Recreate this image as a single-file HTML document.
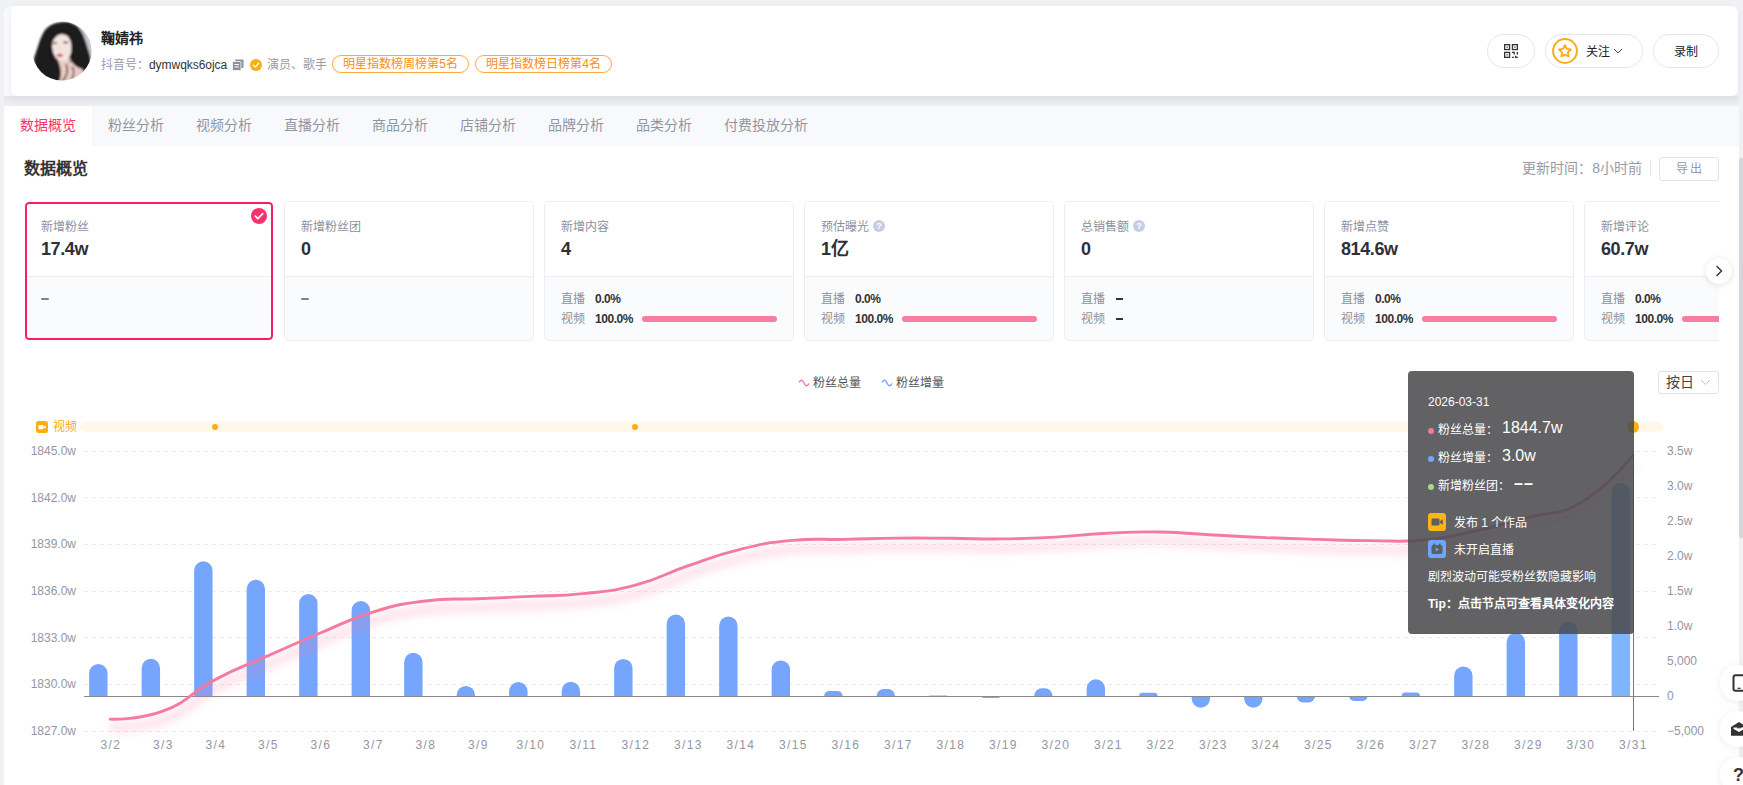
<!DOCTYPE html>
<html lang="zh-CN"><head><meta charset="utf-8"><title>数据概览</title>
<style>
*{box-sizing:border-box;margin:0;padding:0}
html,body{width:1743px;height:785px;overflow:hidden}
body{background:#f0f1f5;font-family:"Liberation Sans",sans-serif;font-size:12px;color:#333;position:relative}
.abs{position:absolute}
#lband{left:4px;top:6px;width:20px;height:90px;background:#f9fafc;border-radius:8px 0 0 0}
#gap{left:4px;top:96px;width:1735px;height:10px;background:linear-gradient(#e6e8ec,#edeff2)}
#hdr{left:11px;top:6px;width:1727px;height:90px;background:#fff;border-radius:6px;box-shadow:0 3px 8px rgba(60,70,110,.07)}
#name{left:90px;top:24px;font-size:14px;font-weight:bold;color:#222;line-height:16px;white-space:nowrap}
#sub{left:90px;top:50px;height:18px;line-height:18px;white-space:nowrap;color:#999ba3;font-size:12px}
#sub .id{position:absolute;left:48px;top:0;color:#333;letter-spacing:-.05px}
.tag{position:absolute;top:-1px;height:18px;line-height:17px;border:1px solid #ffa940;border-radius:9px;color:#fa8c16;text-align:center;font-size:12px;white-space:nowrap;overflow:hidden}
.pill{position:absolute;top:28px;height:34px;border:1px solid #e6e7eb;border-radius:17px;background:#fff;line-height:34px;text-align:center;color:#222;font-size:12px;white-space:nowrap}
#tabs{left:4px;top:106px;width:1735px;height:40px;background:#f8f9fd}
.tab{position:absolute;top:0;height:40px;line-height:38px;text-align:center;font-size:14px;color:#9295a1;white-space:nowrap;overflow:hidden}
.tab.on{background:#fff;color:#f7356b}
#main{left:4px;top:146px;width:1735px;height:639px;background:#fff}
#ttl{left:20px;top:13px;font-size:16px;font-weight:bold;color:#333;line-height:20px;white-space:nowrap}
#upd{right:97px;top:14px;font-size:14px;color:#999ba3;line-height:16px;white-space:nowrap}
#sep{left:1646px;top:15px;width:1px;height:14px;background:#e6e6e6}
#exp{left:1655px;top:11px;width:60px;height:24px;border:1px solid #e1e3e8;border-radius:3px;text-align:center;line-height:22px;color:#999ba3;letter-spacing:2px;font-size:12px;padding-left:2px}
#cards{left:20px;top:55px;width:1695px;height:141px;overflow:hidden}
.card{position:absolute;top:0;width:250px;height:140px;border:1px solid #eceef2;border-radius:5px;background:#fafbfd;overflow:hidden}
.card.act{border-color:transparent}
.ring{position:absolute;left:0;top:0;width:248px;height:138px;border:2px solid #f7205f;border-radius:4px;z-index:3}
.ct{position:absolute;left:0;top:0;right:0;height:75px;background:#fff;border-bottom:1px solid #eceef2}
.cl{position:absolute;left:16px;top:17px;line-height:16px;color:#8d909c;font-size:12px;white-space:nowrap}
.cv{position:absolute;left:16px;top:35px;line-height:24px;font-size:18px;font-weight:bold;color:#2f3038;white-space:nowrap;letter-spacing:-.4px}
.q{display:inline-block;width:12px;height:12px;border-radius:50%;background:#c7cde5;color:#fff;font-size:9px;line-height:12px;text-align:center;font-weight:bold;margin-left:4px;vertical-align:2px}
.cb{position:absolute;left:0;right:0;top:76px;bottom:0}
.row{position:absolute;left:16px;right:0;height:16px;line-height:16px;white-space:nowrap}
.r1{top:13px} .r2{top:33px}
.rk{position:absolute;left:0;color:#8d909c}
.rk.dash{top:7px;width:8px;height:2px;background:#808088;border-radius:1px}
.rv{position:absolute;left:34px;font-weight:bold;color:#333;letter-spacing:-.45px}
.d2{position:absolute;left:1px;top:7px;width:7px;height:2px;background:#333}
.pb{position:absolute;left:81px;top:5px;width:135px;height:6px;border-radius:3px;background:#f87ea1}
.chk{position:absolute;left:226px;top:6px;width:16px;height:16px;z-index:4}
#arrow{left:1702px;top:112px;width:26px;height:26px;border-radius:50%;background:#fff;box-shadow:0 1px 6px rgba(0,0,0,.12)}
.lg{position:absolute;top:229px;line-height:16px;color:#555;font-size:12px;white-space:nowrap}
#sel{left:1654px;top:225px;width:61px;height:23px;border:1px solid #e1e3e8;border-radius:3px;font-size:14px;color:#444;line-height:21px;padding-left:7px;white-space:nowrap}
#vlab{left:49px;top:273px;color:#faad14;line-height:16px;font-size:12px;white-space:nowrap}
#vicon{left:32px;top:275px;width:12px;height:12px;border-radius:2.5px;background:#faad14}
#vbar{left:76px;top:276px;width:1583px;height:10px;border-radius:5px;background:#fff7ea}
.dot{position:absolute;width:6px;height:6px;border-radius:50%;background:#faad14;top:278px}
.ax{position:absolute;font-size:12px;line-height:16px;color:#9496a1;white-space:nowrap}
.ax.l{left:0;width:76px;text-align:right}
.ax.r{left:1667px}
.ax.x{top:737px;width:40px;text-align:center;letter-spacing:1.300px;padding-left:1.300px}
#chart{left:0;top:0;width:1735px;height:639px}
#tip{left:1404px;top:225px;width:226px;height:263px;border-radius:4px;background:rgba(75,76,79,.875);color:#fff;font-size:12px}
#tip div,#tip span{position:absolute;white-space:nowrap;line-height:16px}
#tip .d{width:6px;height:6px;border-radius:50%;left:20px}
#tip .big{font-size:16px;line-height:20px}
.ic{width:18px;height:18px;border-radius:3px;left:20px}
#sb{left:1739px;top:158px;width:4px;height:380px;background:#d3d6da;border-radius:2px 0 0 2px}
.fab{position:absolute;left:1720px;width:36px;height:36px;border-radius:50%;background:#fff;box-shadow:0 1px 8px rgba(0,0,0,.08)}
</style></head><body>
<div id="lband" class="abs"></div>
<div id="gap" class="abs"></div>
<div id="hdr" class="abs">
  <svg class="abs" style="left:21px;top:15px" width="60" height="60" viewBox="0 0 60 60">
    <defs><clipPath id="av"><circle cx="30" cy="30" r="29.6"/></clipPath>
    <filter id="b1"><feGaussianBlur stdDeviation="1"/></filter></defs>
    <g clip-path="url(#av)">
      <rect width="60" height="60" fill="#fff"/>
      <g filter="url(#b1)">
      <path d="M40 -2 L62 -2 L62 40 L52 36 Z" fill="#c6c9d2"/>
      <path d="M14 8 C21 0 40 -2 47 7 C52 13 54 22 57 31 C60 40 60 50 54 56 L42 62 L10 62 C4 56 0 48 1 41 C3 33 6 26 8 19 C10 14 12 10 14 8Z" fill="#1e1a1b"/>
      <path d="M-2 36 C2 38 4 42 2 47 L-2 48Z" fill="#7d7a7c"/>
      <path d="M26 40 L38 37 C40 43 44 46 50 48 C53 51 51 56 46 62 L27 62 C30 54 29 46 26 40Z" fill="#e9cbc3"/>
      <ellipse cx="29.800" cy="26" rx="9.700" ry="14.600" fill="#f4e4df" transform="rotate(-5 29.800 26)"/>
      <path d="M19 25 C18 15 24 9.500 29 9.500 C34 9 40 12 41.500 22 C38 15.500 33.500 13 29 13.200 C24.500 13.800 21 18 19 25Z" fill="#1e1a1b"/>
      <path d="M19 22 C17 30 19 38 23 44 C18 40 15 30 17 22Z" fill="#1e1a1b"/>
      <path d="M40.500 20 C42 28 41 36 37 42 C43 38 45 28 43 20Z" fill="#1e1a1b"/>
      <ellipse cx="27.900" cy="34.300" rx="3.100" ry="1.500" fill="#c4584d"/>
      <ellipse cx="22.900" cy="21.900" rx="2.200" ry=".9" fill="#5e3b39"/><ellipse cx="33.700" cy="21.500" rx="2.600" ry="1" fill="#5e3b39"/>
      <path d="M27.500 24 L26.800 29.500" stroke="#e6c9c2" stroke-width=".9"/>
      <path d="M34 43 C37 49 35 55 30 61 M40 46 C43 50 42 56 38 61" stroke="#2b2223" stroke-width="1.300" fill="none"/>
      </g>
    </g>
  </svg>
  <div id="name" class="abs">鞠婧祎</div>
  <div id="sub" class="abs">抖音号：<span class="id">dymwqks6ojca</span>
    <svg class="abs" style="left:131px;top:3px" width="12" height="12" viewBox="0 0 12 12"><rect x="3" y="0.5" width="8.5" height="8.5" rx="1" fill="#8d909c"/><rect x="0.5" y="2.5" width="8.5" height="9" rx="1" fill="#8d909c" stroke="#fff" stroke-width="0.8"/><path d="M2.5 5.5h4.5M2.5 8h4.5" stroke="#fff" stroke-width="1"/></svg>
    <svg class="abs" style="left:149px;top:3px" width="12" height="12" viewBox="0 0 12 12"><circle cx="6" cy="6" r="6" fill="#faad14"/><path d="M3.3 6.2l1.9 1.8 3.5-3.7" fill="none" stroke="#fff" stroke-width="1.4" stroke-linecap="round" stroke-linejoin="round"/></svg>
    <span class="abs" style="left:166px;top:0">演员、歌手</span>
    <span class="tag" style="left:231px;width:137px">明星指数榜周榜第5名</span>
    <span class="tag" style="left:374px;width:137px">明星指数榜日榜第4名</span>
  </div>
  <div class="pill" style="left:1476px;width:48px">
    <svg class="abs" style="left:16px;top:9px" width="14" height="14" viewBox="0 0 14 14" fill="none" stroke="#33343a" stroke-width="1.300"><rect x=".65" y=".65" width="4.900" height="4.900"/><rect x="8.450" y=".65" width="4.900" height="4.900"/><rect x=".65" y="8.450" width="4.900" height="4.900"/><path d="M2.500 3.100h1.200M10.300 3.100h1.200M2.500 10.900h1.200" stroke-width="1.200"/><path d="M7.900 8.450h2.300v2.100M13.350 7.900v2.600M7.900 13.350h1.900M11.600 11.700v1.650h2.300"/></svg>
  </div>
  <div class="pill" style="left:1534px;width:98px">
    <svg class="abs" style="left:6px;top:3px" width="26" height="26" viewBox="0 0 26 26"><circle cx="13" cy="13" r="11.900" fill="#fff" stroke="#faad14" stroke-width="2"/><path d="M13 7.2l1.8 3.7 4 .6-2.9 2.9.7 4.1-3.6-1.9-3.6 1.9.7-4.1-2.9-2.9 4-.6z" fill="none" stroke="#faad14" stroke-width="1.900" stroke-linejoin="round"/></svg>
    <span class="abs" style="left:40px;top:0;font-size:12px">关注</span>
    <svg class="abs" style="left:67px;top:13px" width="10" height="7" viewBox="0 0 10 7"><path d="M1 1l4 4 4-4" fill="none" stroke="#444" stroke-width="1"/></svg>
  </div>
  <div class="pill" style="left:1642px;width:66px">录制</div>
</div>

<div id="tabs" class="abs"><div class="tab on" style="left:0px;width:88px">数据概览</div><div class="tab" style="left:88px;width:88px">粉丝分析</div><div class="tab" style="left:176px;width:88px">视频分析</div><div class="tab" style="left:264px;width:88px">直播分析</div><div class="tab" style="left:352px;width:88px">商品分析</div><div class="tab" style="left:440px;width:88px">店铺分析</div><div class="tab" style="left:528px;width:88px">品牌分析</div><div class="tab" style="left:616px;width:88px">品类分析</div><div class="tab" style="left:704px;width:116px">付费投放分析</div></div>

<div id="main" class="abs">
  <div id="ttl" class="abs">数据概览</div>
  <div id="upd" class="abs">更新时间：8小时前</div>
  <div id="sep" class="abs"></div>
  <div id="exp" class="abs">导出</div>
  <div id="cards" class="abs"><div class="card act" style="left:0px"><div class="ct"><div class="cl">新增粉丝</div><div class="cv">17.4w</div></div><div class="cb"><div class="row r1"><span class="rk dash"></span></div></div><div class="ring"></div><span class="chk"><svg width="16" height="16" viewBox="0 0 16 16"><circle cx="8" cy="8" r="8" fill="#f5326e"/><path d="M4.3 8.2l2.6 2.5 4.8-5" fill="none" stroke="#fff" stroke-width="1.7" stroke-linecap="round" stroke-linejoin="round"/></svg></span></div><div class="card" style="left:260px"><div class="ct"><div class="cl">新增粉丝团</div><div class="cv">0</div></div><div class="cb"><div class="row r1"><span class="rk dash"></span></div></div></div><div class="card" style="left:520px"><div class="ct"><div class="cl">新增内容</div><div class="cv">4</div></div><div class="cb"><div class="row r1"><span class="rk">直播</span><span class="rv">0.0%</span></div><div class="row r2"><span class="rk">视频</span><span class="rv">100.0%</span><span class="pb"></span></div></div></div><div class="card" style="left:780px"><div class="ct"><div class="cl">预估曝光<span class="q">?</span></div><div class="cv">1亿</div></div><div class="cb"><div class="row r1"><span class="rk">直播</span><span class="rv">0.0%</span></div><div class="row r2"><span class="rk">视频</span><span class="rv">100.0%</span><span class="pb"></span></div></div></div><div class="card" style="left:1040px"><div class="ct"><div class="cl">总销售额<span class="q">?</span></div><div class="cv">0</div></div><div class="cb"><div class="row r1"><span class="rk">直播</span><span class="rv"><i class="d2"></i></span></div><div class="row r2"><span class="rk">视频</span><span class="rv"><i class="d2"></i></span></div></div></div><div class="card" style="left:1300px"><div class="ct"><div class="cl">新增点赞</div><div class="cv">814.6w</div></div><div class="cb"><div class="row r1"><span class="rk">直播</span><span class="rv">0.0%</span></div><div class="row r2"><span class="rk">视频</span><span class="rv">100.0%</span><span class="pb"></span></div></div></div><div class="card" style="left:1560px"><div class="ct"><div class="cl">新增评论</div><div class="cv">60.7w</div></div><div class="cb"><div class="row r1"><span class="rk">直播</span><span class="rv">0.0%</span></div><div class="row r2"><span class="rk">视频</span><span class="rv">100.0%</span><span class="pb"></span></div></div></div></div>
  <div id="arrow" class="abs"><svg width="26" height="26" viewBox="0 0 26 26"><path d="M10.5 8l5 5-5 5" fill="none" stroke="#333" stroke-width="1.4"/></svg></div>

  <svg class="abs" style="left:794px;top:232px" width="12" height="10" viewBox="0 0 12 10"><path d="M1 4.500c1.500-3 3.500-3 5 .500s3.500 3.500 5 .500" fill="none" stroke="#f5789d" stroke-width="1.4"/></svg>
  <div class="lg" style="left:809px">粉丝总量</div>
  <svg class="abs" style="left:877px;top:232px" width="12" height="10" viewBox="0 0 12 10"><path d="M1 4.500c1.500-3 3.500-3 5 .500s3.500 3.500 5 .500" fill="none" stroke="#76a5fd" stroke-width="1.4"/></svg>
  <div class="lg" style="left:892px">粉丝增量</div>
  <div id="sel" class="abs">按日<svg class="abs" style="left:41px;top:7px" width="11" height="7" viewBox="0 0 11 7"><path d="M1 1l4.500 4.500 4.500-4.500" fill="none" stroke="#c0c2c8" stroke-width="1"/></svg></div>

  <div id="vicon" class="abs"><svg width="12" height="12" viewBox="0 0 12 12"><rect x="2.500" y="4" width="5" height="4.200" rx=".8" fill="#fff"/><path d="M7.800 5.600l1.900-1.200v3.400l-1.900-1.200z" fill="#fff"/></svg></div>
  <div id="vlab" class="abs">视频</div>
  <div id="vbar" class="abs"></div>
  <div class="dot" style="left:208px"></div><div class="dot" style="left:628px"></div>
  <div class="dot" style="left:1623px;top:275px;width:12px;height:12px"></div>

  <svg id="chart" class="abs" width="1735" height="639" viewBox="4 146 1735 639">
    <defs><filter id="sh" x="-5%" y="-50%" width="110%" height="200%"><feGaussianBlur stdDeviation="4.500"/></filter></defs>
    <g stroke="#ebebee" stroke-width="1" stroke-dasharray="4 4" shape-rendering="crispEdges"><line x1="84" x2="1659" y1="451.00" y2="451.00"/><line x1="84" x2="1659" y1="497.67" y2="497.67"/><line x1="84" x2="1659" y1="544.33" y2="544.33"/><line x1="84" x2="1659" y1="591.00" y2="591.00"/><line x1="84" x2="1659" y1="637.67" y2="637.67"/><line x1="84" x2="1659" y1="684.33" y2="684.33"/><line x1="84" x2="1659" y1="731.00" y2="731.00"/></g>
    <path d="M89.15,696.00V673.30A9.20,9.20 0 0 1 98.35,664.10H98.35A9.20,9.20 0 0 1 107.55,673.30V696.00Z" fill="#76a5fd"/><path d="M141.65,696.00V667.90A9.20,9.20 0 0 1 150.85,658.70H150.85A9.20,9.20 0 0 1 160.05,667.90V696.00Z" fill="#76a5fd"/><path d="M194.15,696.00V570.50A9.20,9.20 0 0 1 203.35,561.30H203.35A9.20,9.20 0 0 1 212.55,570.50V696.00Z" fill="#76a5fd"/><path d="M246.65,696.00V588.90A9.20,9.20 0 0 1 255.85,579.70H255.85A9.20,9.20 0 0 1 265.05,588.90V696.00Z" fill="#76a5fd"/><path d="M299.15,696.00V603.20A9.20,9.20 0 0 1 308.35,594.00H308.35A9.20,9.20 0 0 1 317.55,603.20V696.00Z" fill="#76a5fd"/><path d="M351.65,696.00V610.30A9.20,9.20 0 0 1 360.85,601.10H360.85A9.20,9.20 0 0 1 370.05,610.30V696.00Z" fill="#76a5fd"/><path d="M404.15,696.00V661.90A9.20,9.20 0 0 1 413.35,652.70H413.35A9.20,9.20 0 0 1 422.55,661.90V696.00Z" fill="#76a5fd"/><path d="M456.65,696.00V695.10A9.20,9.20 0 0 1 465.85,685.90H465.85A9.20,9.20 0 0 1 475.05,695.10V696.00Z" fill="#76a5fd"/><path d="M509.15,696.00V691.20A9.20,9.20 0 0 1 518.35,682.00H518.35A9.20,9.20 0 0 1 527.55,691.20V696.00Z" fill="#76a5fd"/><path d="M561.65,696.00V691.00A9.20,9.20 0 0 1 570.85,681.80H570.85A9.20,9.20 0 0 1 580.05,691.00V696.00Z" fill="#76a5fd"/><path d="M614.15,696.00V668.10A9.20,9.20 0 0 1 623.35,658.90H623.35A9.20,9.20 0 0 1 632.55,668.10V696.00Z" fill="#76a5fd"/><path d="M666.65,696.00V623.70A9.20,9.20 0 0 1 675.85,614.50H675.85A9.20,9.20 0 0 1 685.05,623.70V696.00Z" fill="#76a5fd"/><path d="M719.15,696.00V625.70A9.20,9.20 0 0 1 728.35,616.50H728.35A9.20,9.20 0 0 1 737.55,625.70V696.00Z" fill="#76a5fd"/><path d="M771.65,696.00V669.60A9.20,9.20 0 0 1 780.85,660.40H780.85A9.20,9.20 0 0 1 790.05,669.60V696.00Z" fill="#76a5fd"/><path d="M824.15,696.00V696.00A5.00,5.00 0 0 1 829.15,691.00H837.55A5.00,5.00 0 0 1 842.55,696.00V696.00Z" fill="#76a5fd"/><path d="M876.65,696.00V696.00A7.10,7.10 0 0 1 883.75,688.90H887.95A7.10,7.10 0 0 1 895.05,696.00V696.00Z" fill="#76a5fd"/><path d="M929.15,696.00V696.00A0.60,0.60 0 0 1 929.75,695.40H946.95A0.60,0.60 0 0 1 947.55,696.00V696.00Z" fill="#76a5fd"/><path d="M981.65,696.00V696.00A2.00,2.00 0 0 0 983.65,698.00H998.05A2.00,2.00 0 0 0 1000.05,696.00V696.00Z" fill="#76a5fd"/><path d="M1034.15,696.00V696.00A7.80,7.80 0 0 1 1041.95,688.20H1044.75A7.80,7.80 0 0 1 1052.55,696.00V696.00Z" fill="#76a5fd"/><path d="M1086.65,696.00V688.40A9.20,9.20 0 0 1 1095.85,679.20H1095.85A9.20,9.20 0 0 1 1105.05,688.40V696.00Z" fill="#76a5fd"/><path d="M1139.15,696.00V696.00A3.30,3.30 0 0 1 1142.45,692.70H1154.25A3.30,3.30 0 0 1 1157.55,696.00V696.00Z" fill="#76a5fd"/><path d="M1191.65,696.00V698.60A9.20,9.20 0 0 0 1200.85,707.80H1200.85A9.20,9.20 0 0 0 1210.05,698.60V696.00Z" fill="#76a5fd"/><path d="M1244.15,696.00V698.60A9.20,9.20 0 0 0 1253.35,707.80H1253.35A9.20,9.20 0 0 0 1262.55,698.60V696.00Z" fill="#76a5fd"/><path d="M1296.65,696.00V696.00A6.40,6.40 0 0 0 1303.05,702.40H1308.65A6.40,6.40 0 0 0 1315.05,696.00V696.00Z" fill="#76a5fd"/><path d="M1349.15,696.00V696.00A4.90,4.90 0 0 0 1354.05,700.90H1362.65A4.90,4.90 0 0 0 1367.55,696.00V696.00Z" fill="#76a5fd"/><path d="M1401.65,696.00V696.00A3.50,3.50 0 0 1 1405.15,692.50H1416.55A3.50,3.50 0 0 1 1420.05,696.00V696.00Z" fill="#76a5fd"/><path d="M1454.15,696.00V675.70A9.20,9.20 0 0 1 1463.35,666.50H1463.35A9.20,9.20 0 0 1 1472.55,675.70V696.00Z" fill="#76a5fd"/><path d="M1506.65,696.00V641.90A9.20,9.20 0 0 1 1515.85,632.70H1515.85A9.20,9.20 0 0 1 1525.05,641.90V696.00Z" fill="#76a5fd"/><path d="M1559.15,696.00V630.80A9.20,9.20 0 0 1 1568.35,621.60H1568.35A9.20,9.20 0 0 1 1577.55,630.80V696.00Z" fill="#76a5fd"/><path d="M1611.65,696.00V492.00A9.20,9.20 0 0 1 1620.85,482.80H1620.85A9.20,9.20 0 0 1 1630.05,492.00V696.00Z" fill="#7db5fe"/>
    <line x1="84" x2="1659" y1="696.500" y2="696.500" stroke="#8a8a8a" stroke-width="1" shape-rendering="crispEdges"/>
    <path d="M110.25,719.10C110.25,719.10 138.38,720.37 162.75,711.20C190.88,700.62 188.19,693.85 215.25,679.60C240.69,666.20 241.43,667.58 267.75,655.90C293.93,644.28 293.82,644.02 320.25,633.00C346.32,622.12 345.82,620.31 372.75,612.10C398.32,604.31 398.73,604.39 425.25,601.00C451.23,597.69 451.50,599.85 477.75,598.70C504.00,597.55 504.01,597.67 530.25,596.40C556.51,595.12 556.65,596.38 582.75,593.60C609.15,590.78 609.67,591.95 635.25,585.20C662.17,578.10 661.29,574.95 687.75,565.90C713.79,557.00 713.56,555.78 740.25,549.30C766.06,543.03 766.32,542.89 792.75,540.40C818.82,537.94 819.00,539.97 845.25,539.40C871.50,538.82 871.50,538.38 897.75,538.10C924.00,537.83 924.00,538.10 950.25,538.30C976.50,538.50 976.51,539.20 1002.75,538.90C1029.01,538.60 1029.03,538.52 1055.25,537.10C1081.53,535.67 1081.47,534.48 1107.75,533.20C1133.97,531.93 1134.02,531.55 1160.25,532.00C1186.52,532.45 1186.49,533.60 1212.75,535.00C1238.99,536.40 1238.99,536.50 1265.25,537.60C1291.49,538.70 1291.50,538.65 1317.75,539.40C1344.00,540.15 1344.00,540.45 1370.25,540.60C1396.50,540.75 1396.69,542.38 1422.75,540.00C1449.19,537.58 1449.23,536.58 1475.25,531.00C1501.73,525.33 1501.56,524.48 1527.75,517.50C1554.06,510.48 1557.42,516.48 1580.25,503.00C1609.92,485.48 1632.75,455.50 1632.75,455.50" transform="translate(0,9)" fill="none" stroke="#f5789d" stroke-opacity=".22" stroke-width="9" filter="url(#sh)"/>
    <path d="M110.25,719.10C110.25,719.10 138.38,720.37 162.75,711.20C190.88,700.62 188.19,693.85 215.25,679.60C240.69,666.20 241.43,667.58 267.75,655.90C293.93,644.28 293.82,644.02 320.25,633.00C346.32,622.12 345.82,620.31 372.75,612.10C398.32,604.31 398.73,604.39 425.25,601.00C451.23,597.69 451.50,599.85 477.75,598.70C504.00,597.55 504.01,597.67 530.25,596.40C556.51,595.12 556.65,596.38 582.75,593.60C609.15,590.78 609.67,591.95 635.25,585.20C662.17,578.10 661.29,574.95 687.75,565.90C713.79,557.00 713.56,555.78 740.25,549.30C766.06,543.03 766.32,542.89 792.75,540.40C818.82,537.94 819.00,539.97 845.25,539.40C871.50,538.82 871.50,538.38 897.75,538.10C924.00,537.83 924.00,538.10 950.25,538.30C976.50,538.50 976.51,539.20 1002.75,538.90C1029.01,538.60 1029.03,538.52 1055.25,537.10C1081.53,535.67 1081.47,534.48 1107.75,533.20C1133.97,531.93 1134.02,531.55 1160.25,532.00C1186.52,532.45 1186.49,533.60 1212.75,535.00C1238.99,536.40 1238.99,536.50 1265.25,537.60C1291.49,538.70 1291.50,538.65 1317.75,539.40C1344.00,540.15 1344.00,540.45 1370.25,540.60C1396.50,540.75 1396.69,542.38 1422.75,540.00C1449.19,537.58 1449.23,536.58 1475.25,531.00C1501.73,525.33 1501.56,524.48 1527.75,517.50C1554.06,510.48 1557.42,516.48 1580.25,503.00C1609.92,485.48 1632.75,455.50 1632.75,455.50" fill="none" stroke="#f6799f" stroke-width="2.900" stroke-linecap="round"/>
    <line x1="1633.500" x2="1633.500" y1="451" y2="731" stroke="#777" stroke-width="1" shape-rendering="crispEdges"/>
  </svg>
  <div class="abs" style="left:-4px;top:-146px;width:0;height:0"><div class="ax l" style="top:443.0px">1845.0w</div><div class="ax l" style="top:489.7px">1842.0w</div><div class="ax l" style="top:536.3px">1839.0w</div><div class="ax l" style="top:583.0px">1836.0w</div><div class="ax l" style="top:629.7px">1833.0w</div><div class="ax l" style="top:676.3px">1830.0w</div><div class="ax l" style="top:723.0px">1827.0w</div><div class="ax r" style="top:443.0px">3.5w</div><div class="ax r" style="top:478.0px">3.0w</div><div class="ax r" style="top:513.0px">2.5w</div><div class="ax r" style="top:548.0px">2.0w</div><div class="ax r" style="top:583.0px">1.5w</div><div class="ax r" style="top:618.0px">1.0w</div><div class="ax r" style="top:653.0px">5,000</div><div class="ax r" style="top:688.0px">0</div><div class="ax r" style="top:723.0px">−5,000</div><div class="ax x" style="left:90.25px">3/2</div><div class="ax x" style="left:142.75px">3/3</div><div class="ax x" style="left:195.25px">3/4</div><div class="ax x" style="left:247.75px">3/5</div><div class="ax x" style="left:300.25px">3/6</div><div class="ax x" style="left:352.75px">3/7</div><div class="ax x" style="left:405.25px">3/8</div><div class="ax x" style="left:457.75px">3/9</div><div class="ax x" style="left:510.25px">3/10</div><div class="ax x" style="left:562.75px">3/11</div><div class="ax x" style="left:615.25px">3/12</div><div class="ax x" style="left:667.75px">3/13</div><div class="ax x" style="left:720.25px">3/14</div><div class="ax x" style="left:772.75px">3/15</div><div class="ax x" style="left:825.25px">3/16</div><div class="ax x" style="left:877.75px">3/17</div><div class="ax x" style="left:930.25px">3/18</div><div class="ax x" style="left:982.75px">3/19</div><div class="ax x" style="left:1035.25px">3/20</div><div class="ax x" style="left:1087.75px">3/21</div><div class="ax x" style="left:1140.25px">3/22</div><div class="ax x" style="left:1192.75px">3/23</div><div class="ax x" style="left:1245.25px">3/24</div><div class="ax x" style="left:1297.75px">3/25</div><div class="ax x" style="left:1350.25px">3/26</div><div class="ax x" style="left:1402.75px">3/27</div><div class="ax x" style="left:1455.25px">3/28</div><div class="ax x" style="left:1507.75px">3/29</div><div class="ax x" style="left:1560.25px">3/30</div><div class="ax x" style="left:1612.75px">3/31</div></div>

  <div id="tip" class="abs">
    <div style="left:20px;top:23px">2026-03-31</div>
    <span class="d" style="top:57px;background:#f5789d"></span><div style="left:30px;top:51px">粉丝总量：</div><div class="big" style="left:94px;top:47px">1844.7w</div>
    <span class="d" style="top:85px;background:#76a5fd"></span><div style="left:30px;top:79px">粉丝增量：</div><div class="big" style="left:94px;top:75px">3.0w</div>
    <span class="d" style="top:113px;background:#a9d78b"></span><div style="left:30px;top:107px">新增粉丝团：</div><div class="big" style="left:106px;top:103px;font-weight:bold;letter-spacing:1px">––</div>
    <span class="ic" style="top:142px;background:#fdb515"><svg width="18" height="18" viewBox="0 0 18 18"><rect x="3.500" y="5.500" width="8" height="7" rx="1.200" fill="#5d5e62"/><path d="M11.800 8.200l3-2v5.600l-3-2z" fill="#5d5e62"/></svg></span>
    <div style="left:46px;top:144px">发布 1 个作品</div>
    <span class="ic" style="top:169px;background:#6ea6ff"><svg width="18" height="18" viewBox="0 0 18 18"><path d="M5.500 3.500l1.500 2M12.500 3.500l-1.500 2" stroke="#5d5e62" stroke-width="1.400"/><rect x="3.500" y="5" width="11" height="9" rx="1.800" fill="#5d5e62"/><path d="M7.800 7.600v3.800l3.200-1.900z" fill="#6ea6ff"/></svg></span>
    <div style="left:46px;top:171px">未开启直播</div>
    <div style="left:20px;top:198px">剧烈波动可能受粉丝数隐藏影响</div>
    <div style="left:20px;top:225px;font-weight:bold">Tip：点击节点可查看具体变化内容</div>
  </div>
</div>
<div id="sb" class="abs"></div>
<div class="fab" style="top:665px"><svg class="abs" style="left:12px;top:9px" width="14" height="18" viewBox="0 0 14 18"><rect x="1.500" y="1.200" width="11" height="15.600" rx="2" fill="none" stroke="#333" stroke-width="2"/><path d="M5.500 14.300h3" stroke="#333" stroke-width="1.200"/></svg></div>
<div class="fab" style="top:711px"><svg class="abs" style="left:10px;top:10px" width="18" height="16" viewBox="0 0 18 16"><path d="M1 6l8-5 8 5v8.500H1z" fill="#333"/><path d="M3.500 6.500h11v1.500l-5.500 3-5.500-3z" fill="#fff"/><path d="M1 7l8 4.800L17 7v7.500H1z" fill="#333"/><path d="M7 6.800h4" stroke="#333" stroke-width="1"/></svg></div>
<div class="fab" style="top:757px"><span class="abs" style="left:13px;top:8px;font-size:18px;font-weight:bold;color:#333;line-height:20px">?</span></div>
</body></html>
